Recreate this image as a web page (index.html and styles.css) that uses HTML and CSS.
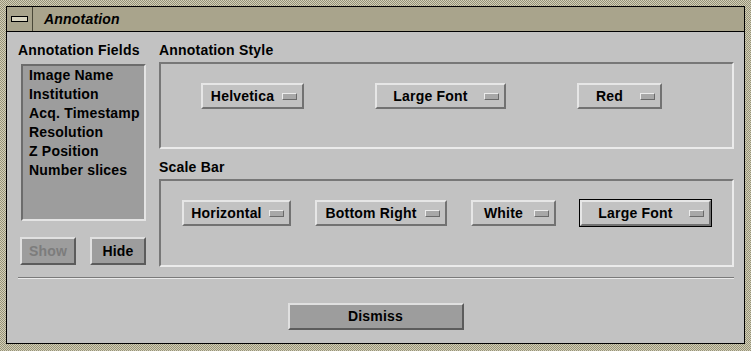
FILE: index.html
```html
<!DOCTYPE html>
<html>
	<head>
		<meta charset="UTF-8">
		<title>Annotation</title>
		<link rel="stylesheet" href="styles.css">
	</head>
	<body>
		<div class="frame">
			<div class="window">
				<div class="titlebar">
					<div class="menuBtn"><span class="menuBar"></span></div>
					<div class="title">Annotation</div>
				</div>
				<div class="content">
					<div class="panes">
						<div class="fields">
							<div class="label fieldsLabel">Annotation Fields</div>
							<div class="list">
								<div class="item">Image Name</div>
								<div class="item">Institution</div>
								<div class="item">Acq. Timestamp</div>
								<div class="item">Resolution</div>
								<div class="item">Z Position</div>
								<div class="item">Number slices</div>
							</div>
							<div class="actions">
								<div class="pushBtn small disabled">Show</div>
								<div class="pushBtn small">Hide</div>
							</div>
						</div>
						<div class="styles">
							<div class="label">Annotation Style</div>
							<div class="group styleRow">
								<div class="option w103"><span class="optText">Helvetica</span><span class="ind"></span></div>
								<div class="option w131"><span class="optText">Large Font</span><span class="ind"></span></div>
								<div class="option w85"><span class="optText">Red</span><span class="ind"></span></div>
							</div>
							<div class="label scaleLabel">Scale Bar</div>
							<div class="group scaleRow">
								<div class="option w109"><span class="optText">Horizontal</span><span class="ind"></span></div>
								<div class="option w132"><span class="optText">Bottom Right</span><span class="ind"></span></div>
								<div class="option w85"><span class="optText">White</span><span class="ind"></span></div>
								<div class="option w131 focus"><span class="optText">Large Font</span><span class="ind"></span></div>
							</div>
						</div>
					</div>
					<div class="separator"></div>
					<div class="footer">
						<div class="pushBtn dismiss">Dismiss</div>
					</div>
				</div>
			</div>
		</div>
	</body>
</html>
```

FILE: styles.css
```css
*{
	margin: 0;
	padding: 0;
	box-sizing: border-box;
}
body{
	background-color: #c2c2c2;
	font-family: "Liberation Sans", Arial, sans-serif;
	font-weight: bold;
	font-size: 14px;
	letter-spacing: 0.2px;
	color: #000;
}
.frame{
	width: 751px;
	height: 351px;
	padding: 6px 6px 7px 6px;
	background: repeating-conic-gradient(#d3cfb7 0 25%, #969279 0 50%) 0 0 / 2px 2px;
}
.window{
	height: 100%;
	border: 1px solid #000;
	display: flex;
	flex-direction: column;
	background-color: #c2c2c2;
}
.titlebar{
	height: 25px;
	display: flex;
	align-items: center;
	background-color: #a9a48c;
	border-bottom: 1px solid #000;
}
.menuBtn{
	width: 26px;
	height: 100%;
	display: flex;
	align-items: center;
	justify-content: center;
	border-right: 1px solid #4a4838;
}
.menuBar{
	width: 17px;
	height: 6px;
	border: 1px solid #000;
	background-color: #d9d5c0;
}
.title{
	margin-left: 11px;
	font-style: italic;
	line-height: 16px;
}
.content{
	flex: 1;
	padding: 10px 10px 0 13px;
	display: flex;
	flex-direction: column;
}
.panes{
	display: flex;
	gap: 13px;
}
.label{
	line-height: 16px;
	white-space: nowrap;
}
.fields{
	width: 126px;
}
.fieldsLabel{
	margin-left: -2px;
}
.list{
	margin: 6px 0 0 1px;
	height: 157px;
	padding-left: 6px;
	background-color: #9d9d9d;
	border: 2px solid;
	border-color: #6c6c6c #e4e4e4 #e4e4e4 #6c6c6c;
}
.item{
	line-height: 19px;
	white-space: nowrap;
}
.actions{
	margin-top: 16px;
	display: flex;
	justify-content: space-between;
}
.pushBtn{
	text-align: center;
	background-color: #9d9d9d;
	border: 2px solid;
	border-color: #e0e0e0 #5c5c5c #5c5c5c #e0e0e0;
}
.small{
	width: 56px;
	height: 28px;
	line-height: 24px;
}
.disabled{
	color: #7c7c7c;
}
.styles{
	flex: 1;
}
.group{
	margin-top: 4px;
	height: 87px;
	display: flex;
	align-items: flex-start;
	padding-top: 19px;
	border: 2px solid;
	border-color: #777 #ebebeb #ebebeb #777;
}
.styleRow{
	padding-left: 40px;
	gap: 71px;
}
.scaleLabel{
	margin-top: 10px;
}
.scaleRow{
	height: 88px;
	padding-left: 21px;
	gap: 24px;
}
.option{
	height: 26px;
	display: flex;
	align-items: center;
	border: 2px solid;
	border-color: #e6e6e6 #727272 #727272 #e6e6e6;
}
.optText{
	flex: 1;
	text-align: center;
	line-height: 22px;
	white-space: nowrap;
}
.ind{
	width: 15px;
	height: 7px;
	margin-right: 5px;
	background-color: #a8a8a8;
	border: 1px solid;
	border-color: #ececec #6a6a6a #6a6a6a #ececec;
}
.focus{
	outline: 1px solid #000;
}
.w85{ width: 85px; }
.w103{ width: 103px; }
.w109{ width: 109px; }
.w131{ width: 131px; }
.w132{ width: 132px; }
.separator{
	margin: 10px 0 0 -2px;
	height: 2px;
	border-top: 1px solid #7a7a7a;
	border-bottom: 1px solid #eaeaea;
}
.footer{
	margin-top: 24px;
	display: flex;
	justify-content: center;
	padding-right: 3px;
}
.dismiss{
	width: 176px;
	height: 27px;
	line-height: 23px;
}
```
